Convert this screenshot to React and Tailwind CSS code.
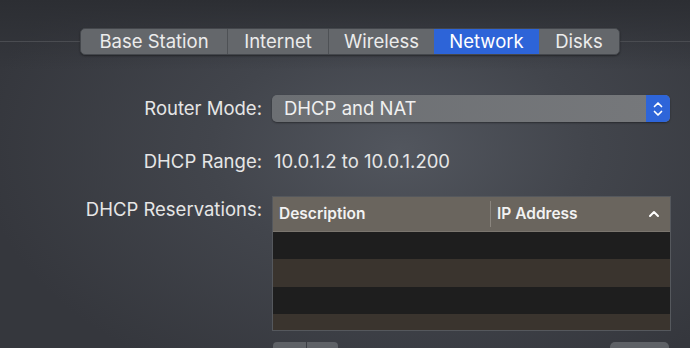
import React from "react";

const font = { fontFamily: "Inter, 'Liberation Sans', sans-serif" };

export default function App() {
  const tabs = [
    { name: "Base Station", w: "w-[146px]" },
    { name: "Internet", w: "w-[101px]" },
    { name: "Wireless", w: "w-[106px]" },
    { name: "Network", w: "w-[105px]", active: true },
    { name: "Disks", w: "w-[80px]" },
  ];
  return (
    <div
      className="w-[690px] h-[348px] overflow-hidden relative bg-[radial-gradient(ellipse_420px_260px_at_400px_150px,#52565e_0%,#42454c_45%,#35373d_100%)] text-[#e6e6e6]"
      style={font}
    >
      <div className="absolute inset-x-0 top-0 h-[70px] bg-gradient-to-b from-[#2c2e33] to-transparent pointer-events-none" />

      <div className="relative flex flex-col pt-[28px]">
        <div className="relative h-[27px]">
          <div className="absolute left-0 right-0 top-[13px] h-px bg-[#4a4c51]" />
          <div className="absolute left-[80px] top-0 flex h-[27px] rounded-[5px] overflow-hidden border border-[#44474c] bg-[#64676b] shadow-[0_1px_2px_rgba(0,0,0,0.4)]">
            {tabs.map((t, i) => (
              <div
                key={t.name}
                className={`${t.w} flex items-center justify-center text-[18.5px] leading-none ${
                  t.active ? "bg-[#2d64d8] text-white" : "text-[#ececec]"
                } ${i > 0 && !t.active && !tabs[i - 1].active ? "border-l border-[#4e5155]" : ""}`}
              >
                {t.name}
              </div>
            ))}
          </div>
        </div>

        <div className="grid grid-cols-[262px_398px] gap-x-[10px] mt-[40px] items-center">
          <div className="text-right text-[18.5px] leading-none">Router Mode:</div>
          <div className="h-[27px] flex rounded-[5px] overflow-hidden bg-gradient-to-r from-[#6c6f73] to-[#76787b] shadow-[0_1px_2px_rgba(0,0,0,0.4)]">
            <div className="flex-1 flex items-center pl-[12px] text-[18.5px] leading-none text-[#f0f0f0]">
              DHCP and NAT
            </div>
            <div className="w-[24px] bg-[#2e65d9] flex items-center justify-center">
              <svg width="12" height="18" viewBox="0 0 12 18" fill="none" stroke="white" strokeWidth="1.7" strokeLinecap="round" strokeLinejoin="round">
                <path d="M2.5 6.5 L6 3 L9.5 6.5" />
                <path d="M2.5 11.5 L6 15 L9.5 11.5" />
              </svg>
            </div>
          </div>

          <div className="text-right text-[18.5px] leading-none mt-[30px]">DHCP Range:</div>
          <div className="text-[18.5px] leading-none mt-[30px] pl-[2px]">10.0.1.2 to 10.0.1.200</div>

          <div className="text-right text-[18.5px] leading-none self-start mt-[25px] pt-[4px]">DHCP Reservations:</div>
          <div className="mt-[25px] flex flex-col">
            <div className="w-[399px] border border-[#55585d] flex flex-col">
              <div className="h-[35px] bg-[#6a655e] border-b border-[#7b766f] flex items-center text-[15.5px] font-semibold text-[#f2f2f2]">
                <div className="w-[217px] pl-[6px]">Description</div>
                <div className="h-[26px] w-px bg-[#8a857e]" />
                <div className="flex-1 pl-[6px]">IP Address</div>
                <div className="pr-[10px]">
                  <svg width="12" height="8" viewBox="0 0 12 8" fill="none" stroke="white" strokeWidth="2" strokeLinecap="round" strokeLinejoin="round">
                    <path d="M2 6 L6 2 L10 6" />
                  </svg>
                </div>
              </div>
              <div className="h-[27px] bg-[#1e1e1e]" />
              <div className="h-[28px] bg-[#3a342e]" />
              <div className="h-[27px] bg-[#1e1e1e]" />
              <div className="h-[16px] bg-[#3a342e]" />
            </div>
            <div className="flex justify-between mt-[11px]">
              <div className="flex gap-px ml-[1px]">
                <div className="w-[33px] h-[20px] rounded-tl-[4px] bg-[#5e6166]" />
                <div className="w-[31px] h-[20px] rounded-tr-[4px] bg-[#5e6166]" />
              </div>
              <div className="w-[59px] h-[20px] rounded-t-[5px] bg-[#5e6166] mr-[1px]" />
            </div>
          </div>
        </div>
      </div>
    </div>
  );
}
